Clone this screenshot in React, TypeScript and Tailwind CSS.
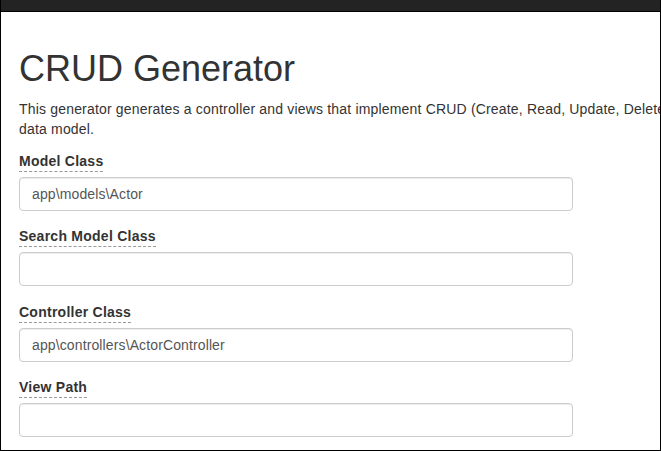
import React from 'react'

interface Field {
  label: string
  value: string
}

const fields: Field[] = [
  { label: 'Model Class', value: 'app\\models\\Actor' },
  { label: 'Search Model Class', value: '' },
  { label: 'Controller Class', value: 'app\\controllers\\ActorController' },
  { label: 'View Path', value: '' },
]

function FormGroup({ field }: { field: Field }) {
  return (
    <div className="mb-[15.6px] flex flex-col items-start">
      <label className="mb-[5px] block border-b border-dashed border-[#999] text-[14px] font-bold leading-[20px] tracking-[0.25px] text-[#333]">
        {field.label}
      </label>
      <input
        readOnly
        value={field.value}
        className="block h-[34px] w-[554px] rounded-[4px] border border-[#ccc] bg-white px-3 text-[14px] tracking-[0.12px] text-[#555] shadow-[inset_0_1px_1px_rgba(0,0,0,0.075)] outline-none"
      />
    </div>
  )
}

export default function App() {
  return (
    <div
      className="flex h-[451px] w-[661px] flex-col overflow-hidden border-x border-b border-black bg-white"
      style={{ fontFamily: '"Liberation Sans", Arial, sans-serif' }}
    >
      <div className="h-[12px] shrink-0 border-b border-black bg-[#232323]" />
      <div className="flex-1 overflow-hidden">
        <div className="w-[1100px] pl-[18px] pt-[37px]">
          <h1 className="mb-[10px] text-[36px] font-normal leading-[1.1] text-[#333]">CRUD Generator</h1>
          <p className="mb-[12px] w-[860px] text-[14px] leading-[20px] tracking-[0.18px] text-[#333]">
            This generator generates a controller and views that implement CRUD (Create, Read, Update, Delete)
            operations for the specified data model.
          </p>
          {fields.map((f) => (
            <FormGroup key={f.label} field={f} />
          ))}
        </div>
      </div>
    </div>
  )
}
